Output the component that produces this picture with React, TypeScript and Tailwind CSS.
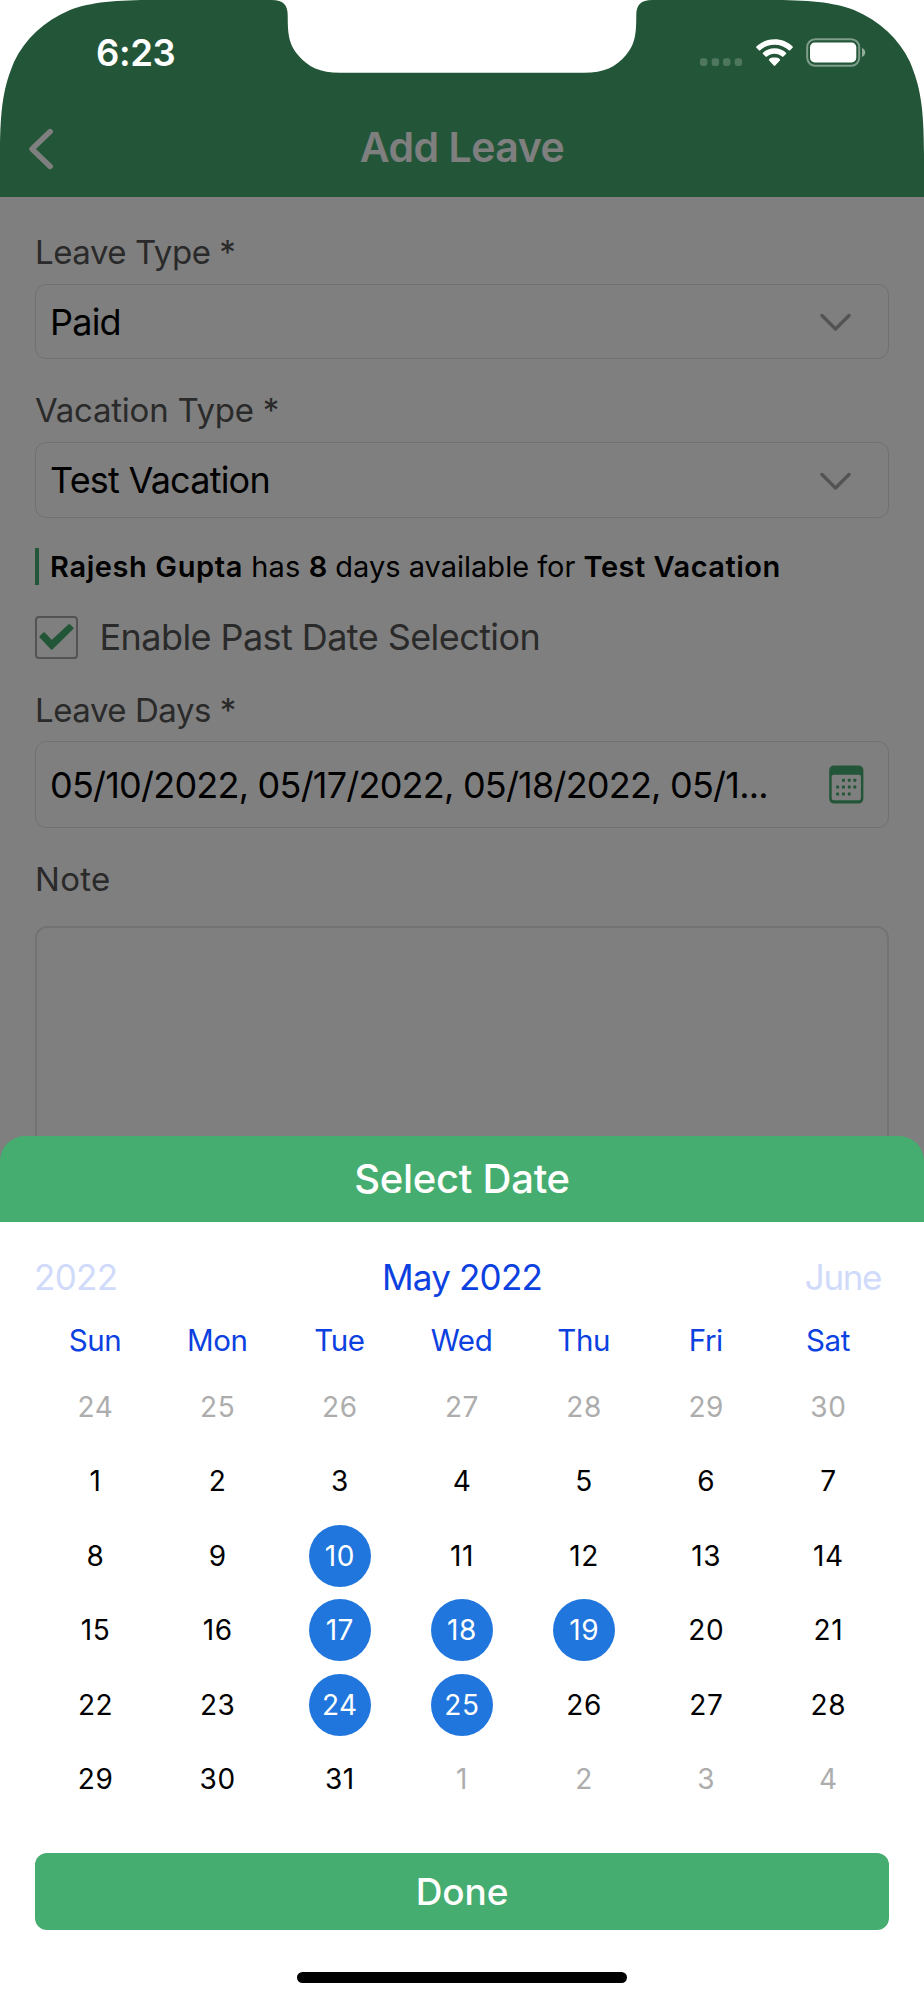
import type { ReactNode } from 'react';
import clsx from 'clsx';

const weekdays = ['Sun', 'Mon', 'Tue', 'Wed', 'Thu', 'Fri', 'Sat'];

const days = [
  ...[24, 25, 26, 27, 28, 29, 30].map((day) => ({ day, outside: true })),
  ...Array.from({ length: 31 }, (_, i) => ({ day: i + 1, outside: false })),
  ...[1, 2, 3, 4].map((day) => ({ day, outside: true })),
];

const selected = [10, 17, 18, 19, 24, 25];

function ChevronDown() {
  return (
    <svg className="mt-0.5 mr-[37px] shrink-0" width="31" height="19" viewBox="0 0 31 19" fill="none">
      <path d="M2 2.5 15.5 16 29 2.5" stroke="#a6a6a6" strokeWidth="3.4" strokeLinecap="round" strokeLinejoin="round" />
    </svg>
  );
}

function CalendarIcon() {
  const dots = [
    [14.4, 15.3], [20.2, 15.3], [25.8, 15.3],
    [8.6, 22], [14.4, 22], [20.2, 22], [25.8, 22],
    [8.6, 29], [14.4, 29], [20.2, 29],
  ];
  return (
    <svg className="mr-6 shrink-0" width="35" height="39" viewBox="0 0 35 39" fill="#46ad70">
      <path
        fillRule="evenodd"
        d="M5 .4h24.6a4.8 4.8 0 0 1 4.8 4.8v28.6a4.8 4.8 0 0 1-4.8 4.8H5A4.8 4.8 0 0 1 .2 33.8V5.2A4.8 4.8 0 0 1 5 .4ZM4.7 9.8a2 2 0 0 0-2 2V33.3a2 2 0 0 0 2 2H29.9a2 2 0 0 0 2-2V11.8a2 2 0 0 0-2-2Z"
      />
      {dots.map(([x, y], i) => (
        <rect key={i} x={x - 1.4} y={y - 1.5} width="2.9" height="3" rx=".5" />
      ))}
    </svg>
  );
}

function StatusBar() {
  return (
    <div className="absolute inset-x-0 top-0 flex h-[106px] items-center justify-between pr-[58px] pl-[96px]">
      <span className="text-[36.5px] font-semibold tracking-[-0.4px] text-white">6:23</span>
      <div className="mb-0.5 flex items-end text-white">
        <svg className="mr-[13px]" width="43" height="9" viewBox="0 0 43 9" fill="white" fillOpacity=".2">
          <rect x="0" y=".3" width="7.4" height="7.7" rx="2.4" />
          <rect x="11.7" y=".3" width="7.4" height="7.7" rx="2.4" />
          <rect x="23" y=".3" width="7.4" height="7.7" rx="2.4" />
          <rect x="34.7" y=".3" width="7.4" height="7.7" rx="2.4" />
        </svg>
        <svg className="mr-[13px]" width="37" height="28" viewBox="0 0 37 28" fill="currentColor">
          <path d="M18.5.3C11.5.3 5.2 2.9.4 7.4c-.4.4-.4.9 0 1.3l2.5 2.5c.4.4.9.4 1.3 0C8 7.700 13 5.700 18.500 5.700s10.500 2 14.300 5.500c.4.400.9.400 1.300 0l2.500-2.500c.4-.4.4-.9 0-1.300C31.800 2.900 25.500.3 18.500.3Z" />
          <path d="M18.5 9.300c-4.500 0-8.500 1.700-11.500 4.400-.4.400-.4.900 0 1.300l2.600 2.600c.4.400.9.400 1.300 0 2-1.800 4.600-2.900 7.600-2.900s5.600 1.100 7.600 2.900c.4.400.9.400 1.300 0L30 15c.4-.4.4-.9 0-1.300-3-2.700-7-4.400-11.500-4.400Z" />
          <path d="M18.5 18.300c-2.100 0-4 .7-5.400 1.900-.4.400-.4.900 0 1.300l4.700 5c.4.500 1 .5 1.400 0l4.700-5c.4-.4.400-.9 0-1.300-1.400-1.200-3.300-1.900-5.400-1.900Z" />
        </svg>
        <svg width="60" height="29" viewBox="0 0 60 29">
          <rect x="1.2" y="1.2" width="52" height="26.6" rx="8" fill="none" stroke="white" strokeOpacity=".42" strokeWidth="2" />
          <rect x="4" y="4.6" width="46.3" height="19.8" rx="4.6" fill="white" />
          <path d="M56 10v9c2-.8 3.2-2.5 3.2-4.5S58 10.800 56 10Z" fill="white" fillOpacity=".5" />
        </svg>
      </div>
    </div>
  );
}

// White corners and notch around the display
function DeviceFrame() {
  return (
    <svg className="absolute top-0 left-0" width="924" height="160" viewBox="0 0 924 160" fill="white">
      <path id="corner" d="M0 0V155C0 106 4 86 14 62 25 39 44 21 70 10 91 2 116 0 155 0Z" />
      <use href="#corner" transform="matrix(-1 0 0 1 924 0)" />
      <path d="M272 0C283 0 287.7 5 287.7 15 287.7 35 289 44 298 55 308 67 320 72.8 340 72.8H584C604 72.8 616 67 626 55 635 44 636.3 35 636.3 15 636.3 5 641 0 652 0Z" />
    </svg>
  );
}

function Label({ className, children }: { className?: string; children: ReactNode }) {
  return <p className={clsx('h-10 text-[33px] leading-10 text-[#555]', className)}>{children}</p>;
}

function Field({ className, value, icon }: { className?: string; value: string; icon: ReactNode }) {
  return (
    <div
      className={clsx(
        'flex items-center justify-between rounded-[11px] border border-[#e0e0e0] pl-[14px] text-[36px] tracking-[-0.78px] text-black',
        className,
      )}
    >
      <span className="whitespace-nowrap">{value}</span>
      {icon}
    </div>
  );
}

function LeaveForm() {
  return (
    <div className="flex flex-col px-[35px] pt-[35px]">
      <Label className="tracking-[-0.45px]">Leave Type *</Label>
      <Field className="mt-3 h-[75px]" value="Paid" icon={<ChevronDown />} />

      <Label className="mt-[31px] tracking-[-0.25px]">Vacation Type *</Label>
      <Field className="mt-3 h-[76px]" value="Test Vacation" icon={<ChevronDown />} />

      <p className="mt-[30px] h-[37px] border-l-4 border-[#46ad70] pl-[11px] text-[29px] leading-[37px] whitespace-nowrap text-black">
        <b className="font-semibold tracking-[0.6px]">Rajesh Gupta</b>{' '}
        <span className="tracking-[0.2px]">has</span>{' '}
        <b className="font-semibold">8</b> days available for{' '}
        <b className="font-semibold tracking-[0.5px]">Test Vacation</b>
      </p>

      <label className="mt-[31px] flex h-[43px] items-center">
        <span className="h-[43px] w-[43px] rounded-[4px] border-2 border-[#a6a6a6]">
          <svg className="-m-0.5" width="43" height="43" viewBox="0 0 43 43" fill="#46ad70" stroke="#46ad70">
            <path d="M5.4 20.7 9 17.200 16.700 25.200 34.200 9 37.600 12.200 16.700 32.800Z" strokeWidth="2" strokeLinejoin="round" />
          </svg>
        </span>
        <span className="mb-0.5 ml-[21.5px] text-[36px] tracking-[-0.57px] text-[#555]">Enable Past Date Selection</span>
      </label>

      <Label className="mt-[31px] tracking-[-0.45px]">Leave Days *</Label>
      <Field
        className="mt-[11px] h-[87px]"
        value="05/10/2022, 05/17/2022, 05/18/2022, 05/1..."
        icon={<CalendarIcon />}
      />

      <Label className="mt-[31px] tracking-[0.3px]">Note</Label>
      <div className="mt-[27px] h-[300px] rounded-xl border-2 border-[#e6e6e6]" />
    </div>
  );
}

function DateSheet() {
  return (
    <div className="absolute inset-x-0 bottom-0 flex h-[864px] flex-col">
      <h2 className="h-[86px] rounded-t-[25px] bg-[#46ad70] text-center text-[40px] leading-[86px] font-medium tracking-[-0.26px] text-white">
        Select Date
      </h2>

      <div className="flex flex-1 flex-col bg-white">
        <div className="mt-[35px] grid h-10 grid-cols-3 pr-[43px] pl-[34px] text-[35px] leading-10 text-[#d0dafa]">
          <span className="tracking-[-0.7px]">2022</span>
          <span className="pl-[9px] text-center tracking-[-0.8px] text-[#0b41e0]">May 2022</span>
          <span className="text-right tracking-[-1.4px]">June</span>
        </div>

        <div className="mt-[23px] grid h-10 grid-cols-7 pr-[35px] pl-[34px] text-center text-[29.5px] leading-10 tracking-[-0.4px] text-[#0b41e0]">
          {weekdays.map((name) => (
            <span key={name}>{name}</span>
          ))}
        </div>

        <div className="mt-[9.8px] grid auto-rows-[74.4px] grid-cols-7 px-[34.5px] text-[28px] tracking-[0.6px]">
          {days.map(({ day, outside }, i) => {
            const isSelected = !outside && selected.includes(day);
            return (
              <div key={i} className="flex items-center justify-center">
                <span
                  className={clsx(
                    'flex h-[62px] w-[62px] items-center justify-center rounded-full',
                    isSelected && 'bg-[#2076dd] text-white',
                    outside && 'text-[#adadad]',
                    !isSelected && !outside && 'text-black',
                  )}
                >
                  {day}
                </span>
              </div>
            );
          })}
        </div>

        <button className="mx-[35px] mt-[36.8px] h-[77.5px] rounded-xl bg-[#46ad70] text-[37px] font-medium tracking-[-0.1px] text-white">
          Done
        </button>
        <div className="mx-auto mt-[41.5px] h-[11px] w-[330px] rounded-full bg-black" />
      </div>
    </div>
  );
}

export default function App() {
  return (
    <div className="relative h-[2000px] w-[924px] overflow-hidden bg-white font-['Inter',sans-serif]">
      <header className="flex h-[197px] items-end bg-[#46ad70] text-white">
        <div className="grid h-[100px] w-full grid-cols-[100px_1fr_100px] items-center">
          <svg className="mt-1 ml-[28px]" width="26" height="42" viewBox="0 0 26 42" fill="none">
            <path d="M22.2 3.5 4 21 22.2 38.5" stroke="white" strokeWidth="5.4" strokeLinecap="round" strokeLinejoin="round" />
          </svg>
          <h1 className="mt-0.5 text-center text-[41px] font-semibold tracking-[-0.5px]">Add Leave</h1>
        </div>
      </header>
      <LeaveForm />

      <div className="absolute inset-0 bg-black/50" />
      <StatusBar />
      <DeviceFrame />
      <DateSheet />
    </div>
  );
}
